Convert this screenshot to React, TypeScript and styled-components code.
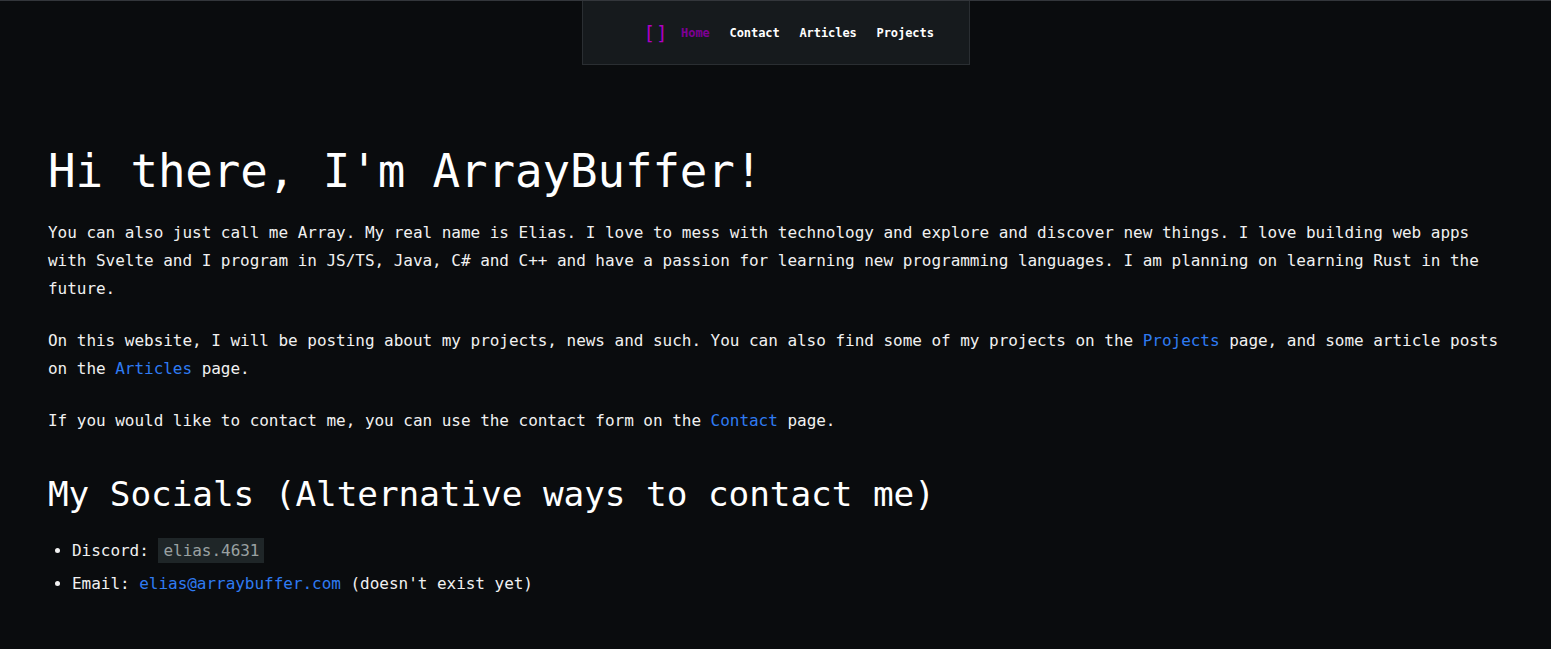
import { FunctionComponent } from "react";
import styled, { createGlobalStyle } from "styled-components";

const GlobalStyle = createGlobalStyle`
  html, body {
    margin: 0;
    padding: 0;
    background-color: #0a0c0e;
  }
  body {
    border-top: 1px solid #33363b;
    font-family: "DejaVu Sans Mono", "Liberation Mono", monospace;
    color: #f1f1f1;
  }
`;

const NavBar = styled.nav`
  width: 388px;
  height: 64px;
  margin: 0 auto;
  box-sizing: border-box;
  background-color: #161a1d;
  border: 1px solid #2a2e32;
  border-top: none;
  display: flex;
  align-items: center;
  padding-left: 61px;
  gap: 19.7px;
`;

const Logo = styled.span`
  color: #b000c4;
  font-size: 19px;
  font-weight: 300;
  letter-spacing: 1px;
  margin-right: -7px;
`;

const NavLink = styled.a<{ $active?: boolean }>`
  font-size: 12px;
  font-weight: 700;
  letter-spacing: -0.05px;
  color: ${(p) => (p.$active ? "#7e0095" : "#ffffff")};
  text-decoration: none;
`;

const Main = styled.main`
  padding: 0 48px;
  font-size: 16px;
  letter-spacing: -0.03px;
  line-height: 28px;
`;

const Title = styled.h1`
  font-size: 45.8px;
  font-weight: 400;
  letter-spacing: -0.1px;
  line-height: 56px;
  margin: 78px 0 20px;
  color: #ffffff;
`;

const Paragraph = styled.p`
  margin: 0 0 24px;
`;

const Link = styled.a`
  color: #2f7bf2;
  text-decoration: none;
`;

const SubTitle = styled.h2`
  font-size: 34.4px;
  font-weight: 400;
  letter-spacing: -0.08px;
  line-height: 42px;
  margin: 38px 0 19px;
  color: #ffffff;
`;

const SocialList = styled.ul`
  margin: 0;
  padding-left: 24px;
`;

const SocialItem = styled.li`
  line-height: 33px;
`;

const Code = styled.code`
  font-family: inherit;
  background-color: #1f2628;
  color: #9aa1a2;
  padding: 3px 5px;
`;

const App: FunctionComponent = () => {
  return (
    <>
      <GlobalStyle />
      <NavBar>
        <Logo>[]</Logo>
        <NavLink $active>Home</NavLink>
        <NavLink>Contact</NavLink>
        <NavLink>Articles</NavLink>
        <NavLink>Projects</NavLink>
      </NavBar>
      <Main>
        <Title>Hi there, I'm ArrayBuffer!</Title>
        <Paragraph>
          You can also just call me Array. My real name is Elias. I love to
          mess with technology and explore and discover new things. I love
          building web apps with Svelte and I program in JS/TS, Java, C# and
          C++ and have a passion for learning new programming languages. I am
          planning on learning Rust in the future.
        </Paragraph>
        <Paragraph>
          On this website, I will be posting about my projects, news and such.
          You can also find some of my projects on the <Link>Projects</Link>{" "}
          page, and some article posts on the <Link>Articles</Link> page.
        </Paragraph>
        <Paragraph>
          If you would like to contact me, you can use the contact form on the{" "}
          <Link>Contact</Link> page.
        </Paragraph>
        <SubTitle>My Socials (Alternative ways to contact me)</SubTitle>
        <SocialList>
          <SocialItem>
            Discord: <Code>elias.4631</Code>
          </SocialItem>
          <SocialItem>
            Email: <Link>elias@arraybuffer.com</Link> (doesn't exist yet)
          </SocialItem>
        </SocialList>
      </Main>
    </>
  );
};

export default App;
